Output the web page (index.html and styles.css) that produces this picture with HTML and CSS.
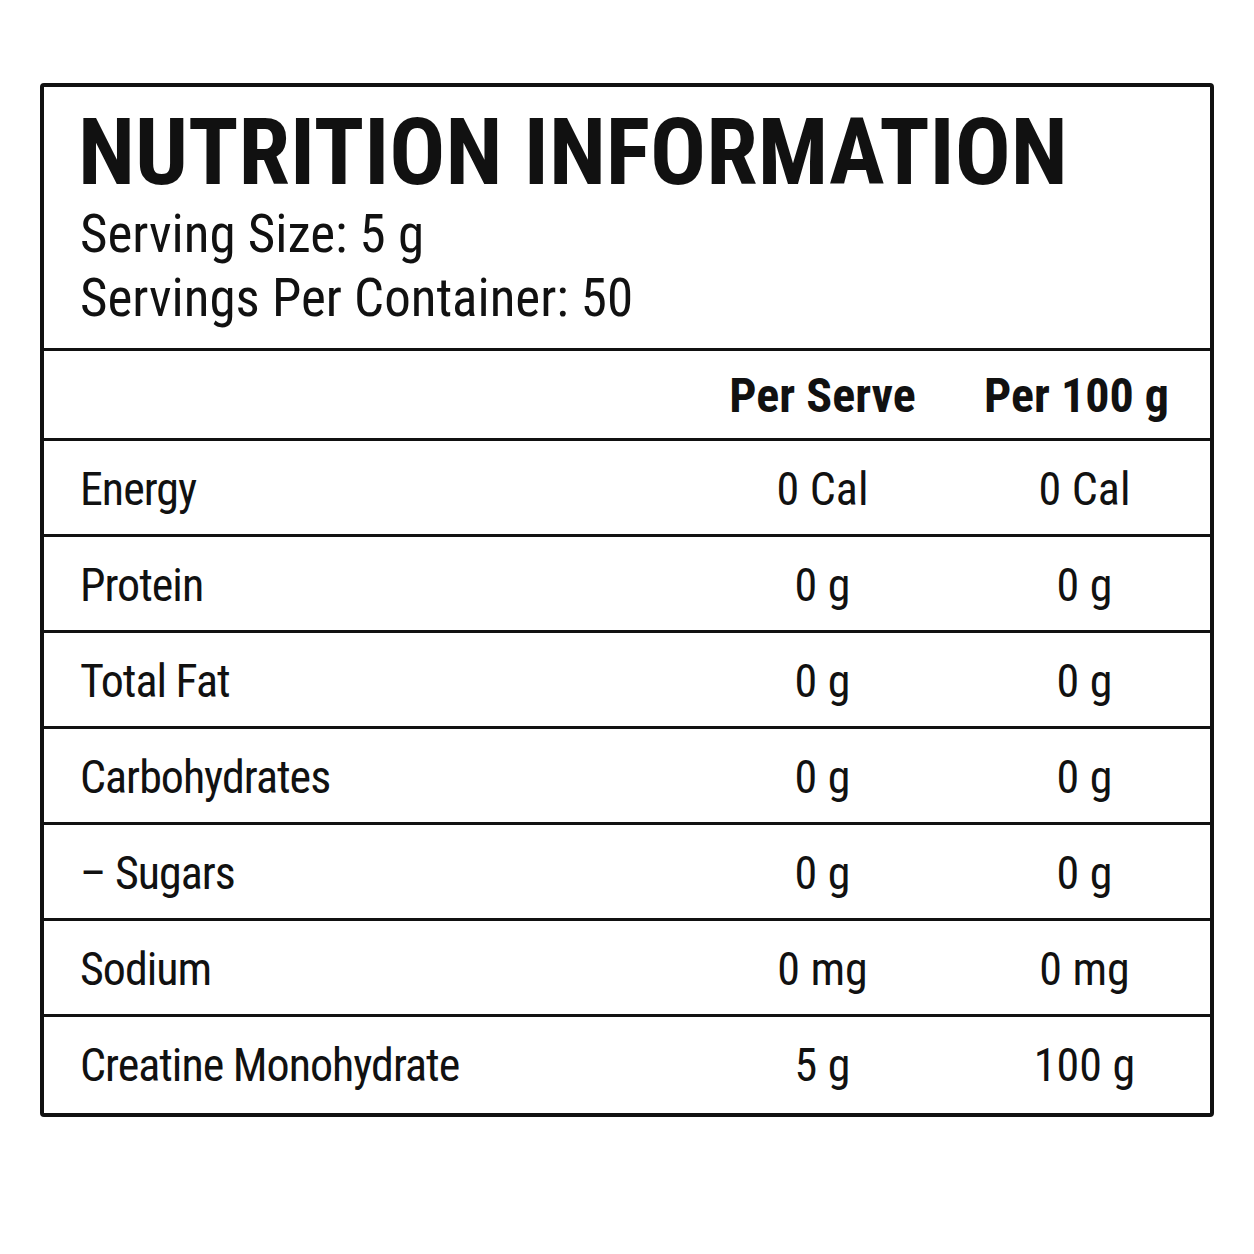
FILE: index.html
```html
<!DOCTYPE html>
<html lang="en">
<head>
<meta charset="utf-8">
<title>Nutrition Information</title>
<link rel="stylesheet" href="styles.css">
</head>
<body>
<div class="label">
  <div class="head">
    <h1 class="title">NUTRITION INFORMATION</h1>
    <p class="serving first">Serving Size: 5 g</p>
    <p class="serving">Servings Per Container: 50</p>
  </div>
  <div class="table">
    <div class="row header">
      <div class="cell name"></div>
      <div class="cell val">Per Serve</div>
      <div class="cell val hundred">Per 100 g</div>
    </div>
    <div class="row">
      <div class="cell name">Energy</div>
      <div class="cell val">0 Cal</div>
      <div class="cell val">0 Cal</div>
    </div>
    <div class="row">
      <div class="cell name">Protein</div>
      <div class="cell val">0 g</div>
      <div class="cell val">0 g</div>
    </div>
    <div class="row">
      <div class="cell name">Total Fat</div>
      <div class="cell val">0 g</div>
      <div class="cell val">0 g</div>
    </div>
    <div class="row">
      <div class="cell name">Carbohydrates</div>
      <div class="cell val">0 g</div>
      <div class="cell val">0 g</div>
    </div>
    <div class="row">
      <div class="cell name">– Sugars</div>
      <div class="cell val">0 g</div>
      <div class="cell val">0 g</div>
    </div>
    <div class="row">
      <div class="cell name">Sodium</div>
      <div class="cell val">0 mg</div>
      <div class="cell val">0 mg</div>
    </div>
    <div class="row last">
      <div class="cell name">Creatine Monohydrate</div>
      <div class="cell val">5 g</div>
      <div class="cell val">100 g</div>
    </div>
  </div>
</div>
</body>
</html>
```
FILE: styles.css
```css
html, body {
  margin: 0;
  padding: 0;
  background: #ffffff;
}
body {
  font-family: "Roboto", "Liberation Sans Narrow", sans-serif;
  font-stretch: 75%;
  color: #111111;
  padding: 83px 40px 0 40px;
}
.label {
  width: 1174px;
  box-sizing: border-box;
  border: 4px solid #111111;
  border-radius: 4px;
}
.head {
  padding: 19px 0 18px 36px;
  border-bottom: 3px solid #111111;
}
.title {
  margin: 0;
  font-size: 93px;
  line-height: 93px;
  font-weight: 700;
  margin-left: -2px;
}
.serving {
  margin: 0;
  font-size: 53px;
  line-height: 64px;
  font-weight: 400;
}
.serving.first {
  margin-top: 3px;
}
.row {
  display: grid;
  grid-template-columns: 1fr 273px 251px;
  height: 93px;
  border-bottom: 3px solid #111111;
  font-size: 46px;
}
.row.last {
  border-bottom: none;
  height: 96px;
}
.row.header {
  height: 87px;
  font-weight: 700;
  font-size: 48px;
}
.cell {
  display: flex;
  align-items: center;
  padding-top: 3px;
  line-height: 1;
}
.row.last .cell {
  padding-top: 0;
}
.name {
  padding-left: 36px;
  letter-spacing: -1px;
}
.val {
  justify-content: center;
}
.hundred {
  padding-right: 16px;
}
```
